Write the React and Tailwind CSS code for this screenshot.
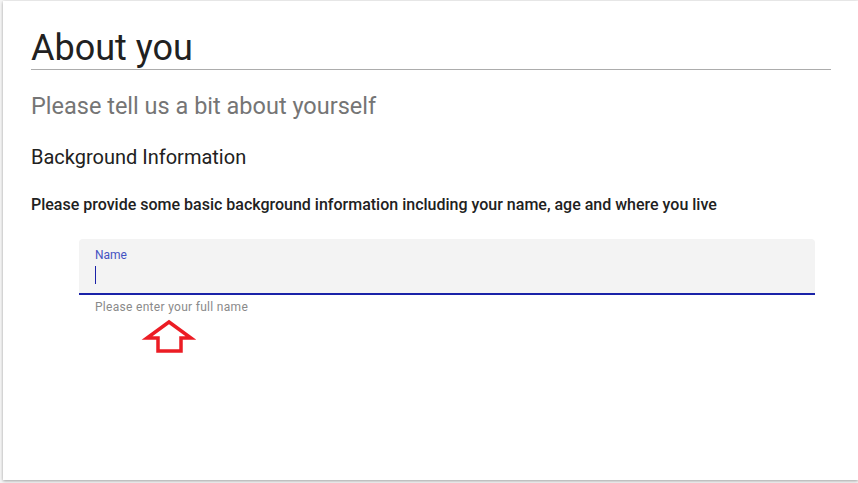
export default function App() {
  return (
    <div className="min-h-screen bg-[#f5f5f5] pl-[3px] pt-px pb-[3px] font-['Roboto',sans-serif]">
      <div className="h-[479px] bg-white shadow-[0_1px_3px_rgba(0,0,0,0.35)] pl-[28px] pr-[27px] pt-[27px]">
        <h1 className="text-[36px] leading-[40px] font-normal text-[#212121] border-b border-[#acacac] pb-px">About you</h1>
        <h2 className="mt-[22px] text-[23.5px] leading-[28px] text-[#757575]">Please tell us a bit about yourself</h2>
        <h3 className="mt-[24px] text-[20px] leading-[26px] text-[#212121]">Background Information</h3>
        <p className="mt-[25px] text-[16px] leading-[20px] font-medium text-[#212121]">
          Please provide some basic background information including your name, age and where you live
        </p>

        <div className="mt-[24px] ml-[48px] mr-[16px]">
          <div className="bg-[#f3f3f3] rounded-t-[4px] border-b-2 border-[#1a22a8] px-[16px] pt-[9px] h-[56px]">
            <div className="text-[12px] leading-[14px] text-[#4352c2]">Name</div>
            <div className="mt-[4px] h-[18px] flex items-center">
              <span className="block w-px h-[18px] bg-[#1a22a8]" />
            </div>
          </div>
          <div className="px-[16px] pt-[5px] text-[12px] leading-[14px] tracking-[0.3px] text-[#8a8a8a]">
            Please enter your full name
          </div>
        </div>

        <svg className="ml-[109px] mt-[5px]" width="56" height="36" viewBox="140 319 56 36">
          <polygon
            points="169,322 191,338 181,338 181,351 158,351 158,338 147,338"
            fill="none"
            stroke="#ec1c24"
            strokeWidth="3.5"
            strokeLinejoin="miter"
          />
        </svg>
      </div>
    </div>
  )
}
